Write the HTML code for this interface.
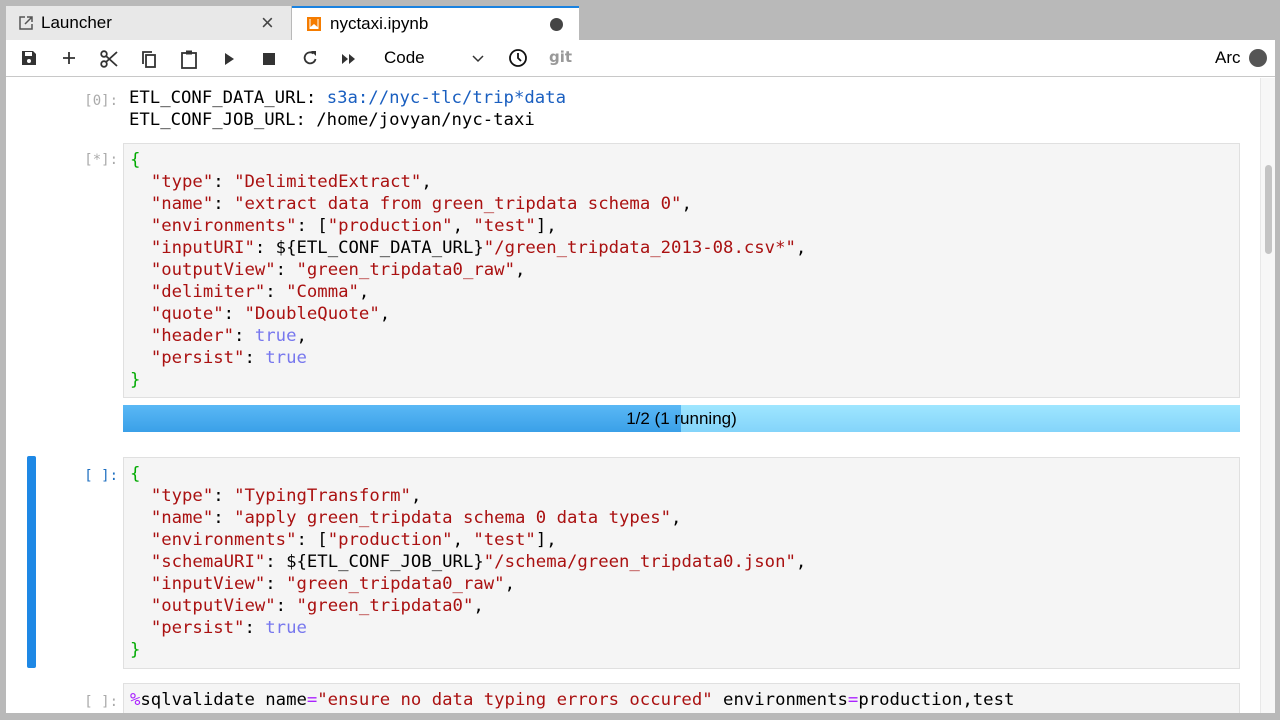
<!DOCTYPE html>
<html><head><meta charset="utf-8"><style>
*{box-sizing:border-box;margin:0;padding:0}
body{width:1280px;height:720px;background:#b9b9b9;position:relative;overflow:hidden;font-family:"Liberation Sans",sans-serif}
.tab{position:absolute;top:6px;height:34px;font-size:17px;display:flex;align-items:center}
#panel{position:absolute;left:6px;top:40px;width:1269px;height:673px;background:#fff;overflow:hidden}
#tb{position:absolute;left:0;top:0;width:100%;height:37px;border-bottom:1px solid #c8c8c8}
#tb svg{position:absolute;top:9px}
.mono{font-family:"DejaVu Sans Mono","Liberation Mono",monospace;font-size:17.3px;line-height:22px;white-space:pre;color:#000}
.box{position:absolute;left:117px;width:1117px;background:#f5f5f5;border:1px solid #e0e0e0;padding:5px 0 0 6px}
.pr{position:absolute;left:64px;width:48px;text-align:right;font-family:"DejaVu Sans Mono",monospace;font-size:14px;color:#aaa}
.k{color:#a11}.s{color:#a11}.b{color:#0a0}.t{color:#77e}.u{color:#1a5fc0}.m{color:#a2f}
</style></head><body>
<div class="tab" style="left:6px;width:285px;background:#e8e8e8;padding-left:12px">
<svg width="16" height="16" viewBox="0 0 16 16" style="margin-right:7px"><path d="M7 2H2v12h12V9" fill="none" stroke="#555" stroke-width="1.5"/><path d="M9 2h5v5M14 2L7 9" fill="none" stroke="#555" stroke-width="1.5"/></svg>Launcher
<span style="position:absolute;left:255px;font-size:22px;color:#444">×</span></div>
<div class="tab" style="left:292px;width:287px;background:#fff;border-top:2px solid #1a82e0;padding-left:14px">
<svg width="16" height="16" viewBox="0 0 16 16" style="margin-right:8px"><rect x="1" y="1" width="14" height="14" fill="#f57c00"/><rect x="3.5" y="3" width="9" height="10" fill="#fff"/><path d="M4.5 3v8l3.5-3 3.5 3V3z" fill="#f57c00"/></svg>nyctaxi.ipynb
<span style="position:absolute;left:258px;width:13px;height:13px;border-radius:50%;background:#444"></span></div>
<div id="panel">
<div id="tb">
<svg style="left:14px" width="18" height="18" viewBox="0 0 18 18"><path d="M2 2h11l3 3v11H2z" fill="#333"/><rect x="5" y="3" width="7" height="4" fill="#fff"/><circle cx="9" cy="12" r="2" fill="#fff"/></svg>
<svg style="left:54px" width="18" height="18" viewBox="0 0 18 18"><path d="M9 3v12M3 9h12" stroke="#333" stroke-width="1.8"/></svg>
<svg style="left:93px" width="20" height="20" viewBox="0 0 20 20"><circle cx="5" cy="5" r="2.8" fill="none" stroke="#333" stroke-width="1.8"/><circle cx="5" cy="15" r="2.8" fill="none" stroke="#333" stroke-width="1.8"/><path d="M7 7l11 10M7 13L18 3" stroke="#333" stroke-width="1.8"/></svg>
<svg style="left:134px" width="18" height="20" viewBox="0 0 18 20"><path d="M3 15V3h9" fill="none" stroke="#333" stroke-width="1.8"/><rect x="6" y="6" width="9" height="12" fill="none" stroke="#333" stroke-width="1.8"/></svg>
<svg style="left:174px" width="18" height="20" viewBox="0 0 18 20"><rect x="2" y="4" width="14" height="15" fill="none" stroke="#333" stroke-width="1.8"/><rect x="6" y="1.5" width="6" height="4" fill="#333"/></svg>
<svg style="left:216px;top:12px" width="14" height="14" viewBox="0 0 14 14"><path d="M3 1l9 6-9 6z" fill="#333"/></svg>
<svg style="left:257px;top:13px" width="12" height="12"><rect width="12" height="12" fill="#333"/></svg>
<svg style="left:295px" width="18" height="18" viewBox="0 0 18 18"><path d="M14.5 10A5.5 5.5 0 1 1 12.5 4.5" fill="none" stroke="#333" stroke-width="1.8"/><path d="M10 2h5v5z" fill="#333"/></svg>
<svg style="left:335px;top:13px" width="16" height="12" viewBox="0 0 16 12"><path d="M1 1l6 5-6 5zM8 1l6 5-6 5z" fill="#333"/></svg>
<div style="position:absolute;left:378px;top:8px;font-size:17px">Code</div>
<svg style="left:466px;top:14px" width="12" height="10"><path d="M1 2l5 5 5-5" fill="none" stroke="#333" stroke-width="1.5"/></svg>
<svg style="left:502px;top:8px" width="20" height="20" viewBox="0 0 20 20"><circle cx="10" cy="10" r="8" fill="none" stroke="#111" stroke-width="1.8"/><path d="M10 5v5l3 3" fill="none" stroke="#111" stroke-width="1.8"/></svg>
<div style="position:absolute;left:543px;top:8px;font-size:15px;color:#999;font-weight:bold;font-family:'DejaVu Sans',sans-serif">git</div>
<div style="position:absolute;left:1209px;top:8px;font-size:17px">Arc</div>
<div style="position:absolute;left:1243px;top:9px;width:18px;height:18px;border-radius:50%;background:#555"></div>
</div>
<div style="position:absolute;left:1254px;top:38px;width:15px;height:640px;background:#f7f7f7;border-left:1px solid #e8e8e8"></div>
<div style="position:absolute;left:1259px;top:125px;width:7px;height:89px;border-radius:4px;background:#c4c4c4"></div>

<div class="pr" style="top:53px">[0]:</div>
<div class="mono" style="position:absolute;left:123px;top:47px">ETL_CONF_DATA_URL: <span class="u">s3a://nyc-tlc/trip*data</span>
ETL_CONF_JOB_URL: /home/jovyan/nyc-taxi</div>

<div class="pr" style="top:112px">[*]:</div>
<div class="box mono" style="top:103px;height:255px"><span class="b">{</span>
  <span class="k">"type"</span>: <span class="s">"DelimitedExtract"</span>,
  <span class="k">"name"</span>: <span class="s">"extract data from green_tripdata schema 0"</span>,
  <span class="k">"environments"</span>: [<span class="s">"production"</span>, <span class="s">"test"</span>],
  <span class="k">"inputURI"</span>: ${ETL_CONF_DATA_URL}<span class="s">"/green_tripdata_2013-08.csv*"</span>,
  <span class="k">"outputView"</span>: <span class="s">"green_tripdata0_raw"</span>,
  <span class="k">"delimiter"</span>: <span class="s">"Comma"</span>,
  <span class="k">"quote"</span>: <span class="s">"DoubleQuote"</span>,
  <span class="k">"header"</span>: <span class="t">true</span>,
  <span class="k">"persist"</span>: <span class="t">true</span>
<span class="b">}</span></div>

<div style="position:absolute;left:117px;top:365px;width:1117px;height:27px;background:linear-gradient(#9fe6ff,#84d4fa)"></div>
<div style="position:absolute;left:117px;top:365px;width:558px;height:27px;background:linear-gradient(#5ab8f5,#3aa0e8)"></div>
<div style="position:absolute;left:117px;top:365px;width:1117px;height:27px;line-height:27px;text-align:center;font-size:17px">1/2 (1 running)</div>

<div style="position:absolute;left:21px;top:416px;width:9px;height:212px;background:#1e88e5;border-radius:2px"></div>
<div class="pr" style="top:428px;color:#1e6fc0">[ ]:</div>
<div class="box mono" style="top:417px;height:212px"><span class="b">{</span>
  <span class="k">"type"</span>: <span class="s">"TypingTransform"</span>,
  <span class="k">"name"</span>: <span class="s">"apply green_tripdata schema 0 data types"</span>,
  <span class="k">"environments"</span>: [<span class="s">"production"</span>, <span class="s">"test"</span>],
  <span class="k">"schemaURI"</span>: ${ETL_CONF_JOB_URL}<span class="s">"/schema/green_tripdata0.json"</span>,
  <span class="k">"inputView"</span>: <span class="s">"green_tripdata0_raw"</span>,
  <span class="k">"outputView"</span>: <span class="s">"green_tripdata0"</span>,
  <span class="k">"persist"</span>: <span class="t">true</span>
<span class="b">}</span></div>

<div class="pr" style="top:654px">[ ]:</div>
<div class="box mono" style="top:643px;height:60px"><span class="m">%</span>sqlvalidate name<span class="m">=</span><span class="s">"ensure no data typing errors occured"</span> environments<span class="m">=</span>production,test
SELECT</div>
</div>
</body></html>
